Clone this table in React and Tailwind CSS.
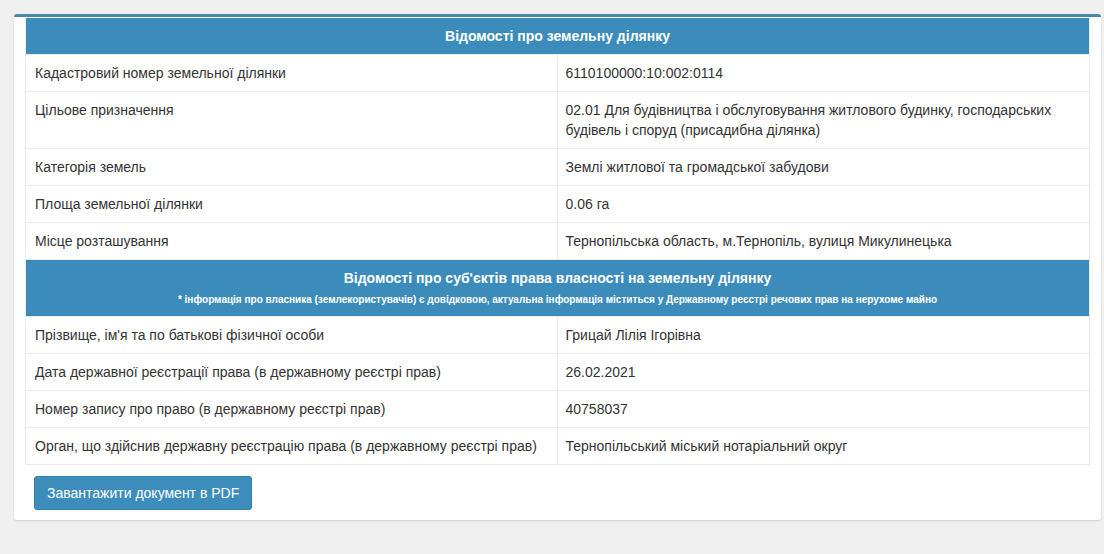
export default function App() {
    const landRows = [
        ['Кадастровий номер земельної ділянки', '6110100000:10:002:0114'],
        ['Цільове призначення', '02.01 Для будівництва і обслуговування житлового будинку, господарських будівель і споруд (присадибна ділянка)'],
        ['Категорія земель', 'Землі житлової та громадської забудови'],
        ['Площа земельної ділянки', '0.06 га'],
        ['Місце розташування', 'Тернопільська область, м.Тернопіль, вулиця Микулинецька'],
    ]
    const ownerRows = [
        ["Прізвище, ім'я та по батькові фізичної особи", 'Грицай Лілія Ігорівна'],
        ['Дата державної реєстрації права (в державному реєстрі прав)', '26.02.2021'],
        ['Номер запису про право (в державному реєстрі прав)', '40758037'],
        ['Орган, що здійснив державну реєстрацію права (в державному реєстрі прав)', 'Тернопільський міський нотаріальний округ'],
    ]

    const Row = ({ label, value }) => (
        <div className="grid grid-cols-2 border-t border-[#ebebeb]">
            <div className="px-[9px] py-[8px] border-r border-[#ebebeb]">{label}</div>
            <div className="px-[8px] py-[8px] pr-[30px]">{value}</div>
        </div>
    )

    return (
        <div
            className="min-h-[554px] bg-[#f0f0f0] pt-[14px] text-[14px] leading-[20px] text-[#333]"
            style={{ fontFamily: '"Liberation Sans", Arial, sans-serif' }}
        >
            <div className="ml-[14px] w-[1087px] bg-white border-t-[3px] border-[#4a88ad] rounded-[3px] shadow-[0_1px_2px_rgba(0,0,0,0.15)] px-[11px] pt-[1px] pb-[10px]">
                <div className="border-x border-b border-[#ebebeb]">
                    <div className="bg-[#3c8cbb] text-white font-bold text-center py-[8px]">
                        Відомості про земельну ділянку
                    </div>
                    {landRows.map(([l, v]) => (
                        <Row key={l} label={l} value={v} />
                    ))}
                    <div className="bg-[#3c8cbb] text-white font-bold text-center pt-[8px] pb-[9px] border-t border-[#ebebeb]">
                        <div>Відомості про суб'єктів права власності на земельну ділянку</div>
                        <div className="text-[10px] leading-[14px] mt-[5px]">
                            * інформація про власника (землекористувачів) є довідковою, актуальна інформація міститься у Державному реєстрі речових прав на нерухоме майно
                        </div>
                    </div>
                    {ownerRows.map(([l, v]) => (
                        <Row key={l} label={l} value={v} />
                    ))}
                </div>
                <div className="mt-[11px] pl-[9px]">
                    <button className="bg-[#3c8dbc] border border-[#367fa9] text-white text-[14px] leading-[20px] px-[12px] py-[6px] rounded-[3px]">
                        Завантажити документ в PDF
                    </button>
                </div>
            </div>
        </div>
    )
}
